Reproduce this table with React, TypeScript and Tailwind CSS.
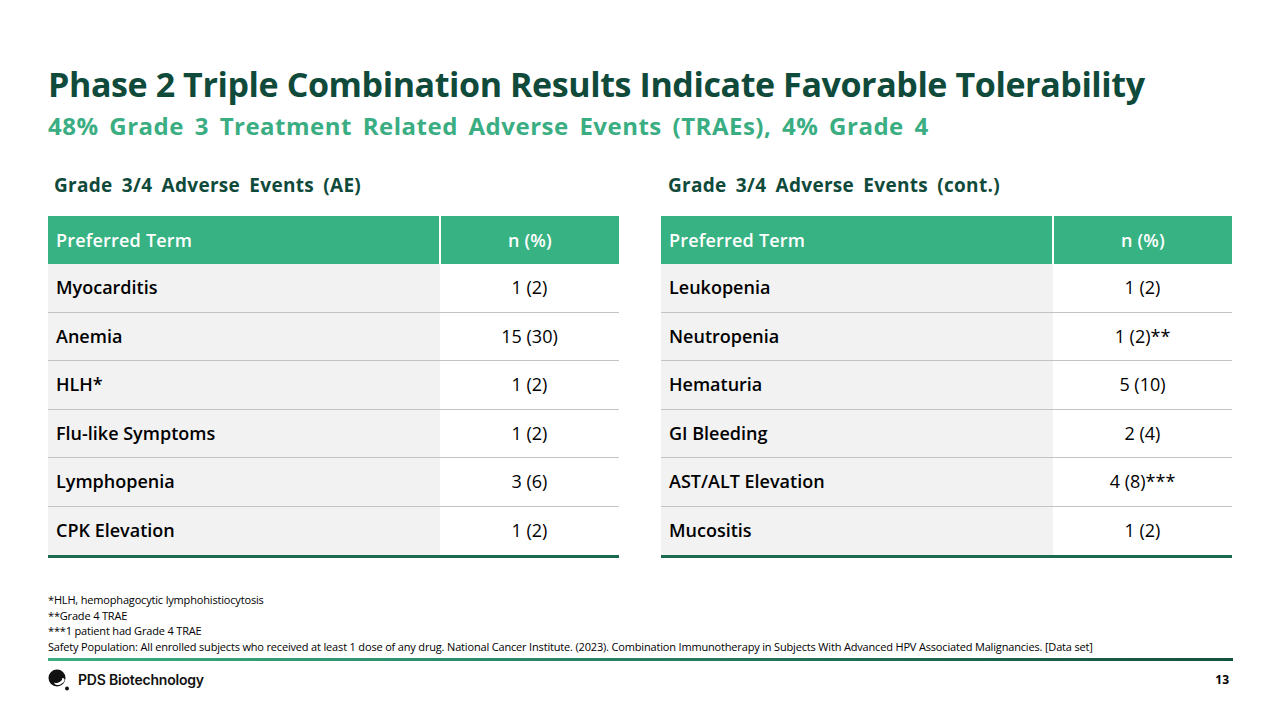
import React from "react";

const left = [
  ["Myocarditis", "1 (2)"],
  ["Anemia", "15 (30)"],
  ["HLH*", "1 (2)"],
  ["Flu-like Symptoms", "1 (2)"],
  ["Lymphopenia", "3 (6)"],
  ["CPK Elevation", "1 (2)"],
];
const right = [
  ["Leukopenia", "1 (2)"],
  ["Neutropenia", "1 (2)**"],
  ["Hematuria", "5 (10)"],
  ["GI Bleeding", "2 (4)"],
  ["AST/ALT Elevation", "4 (8)***"],
  ["Mucositis", "1 (2)"],
];

function Table({ title, rows, titleIndent }: { title: string; rows: string[][]; titleIndent: string }) {
  return (
    <div className="flex flex-col w-[571px]">
      <div
        className={`h-[36px] flex items-center text-[19px] font-bold text-[#0f4a3a] tracking-[0.3px] ${titleIndent}`}
        style={{ wordSpacing: "4px" }}
      >
        {title}
      </div>
      <div className="h-[13px]" />
      <div className="flex h-[48px] bg-[#37b282] text-white text-[18px] font-semibold tracking-[0.2px]">
        <div className="w-[391px] flex items-center pl-[8px]">Preferred Term</div>
        <div className="w-[2px] bg-white" />
        <div className="flex-1 flex items-center justify-center">n (%)</div>
      </div>
      {rows.map(([a, b], i) => (
        <div
          key={a}
          className={`flex h-[48.5px] text-[18px] text-black ${i < rows.length - 1 ? "border-b border-[#c4c4c4]" : ""}`}
        >
          <div className="w-[392px] bg-[#f2f2f2] flex items-center pl-[8px] font-semibold">{a}</div>
          <div className="flex-1 flex items-center justify-center">{b}</div>
        </div>
      ))}
      <div className="h-[3px] bg-[#1d6a53]" />
    </div>
  );
}

export default function App() {
  return (
    <div
      className="w-[1280px] h-[720px] bg-white relative overflow-hidden flex flex-col"
      style={{ fontFamily: '"Open Sans", "Noto Sans", sans-serif' }}
    >
      <div className="pl-[48px] pt-[61px]">
        <div className="text-[34px] leading-[46px] font-bold text-[#0f4a3a] tracking-[-0.4px]">
          Phase 2 Triple Combination Results Indicate Favorable Tolerability
        </div>
        <div
          className="mt-[4px] text-[24px] leading-[30px] font-bold text-[#3aae82] tracking-[0.5px]"
          style={{ wordSpacing: "4px" }}
        >
          48% Grade 3 Treatment Related Adverse Events (TRAEs), 4% Grade 4
        </div>
      </div>
      <div className="flex pl-[48px] gap-[42px] mt-[26px]">
        <Table title="Grade 3/4 Adverse Events (AE)" rows={left} titleIndent="pl-[6px]" />
        <Table title="Grade 3/4 Adverse Events (cont.)" rows={right} titleIndent="pl-[7px]" />
      </div>
      <div className="pl-[48px] mt-[34px] text-[11px] leading-[15.7px] text-black tracking-[-0.17px]">
        <div>*HLH, hemophagocytic lymphohistiocytosis</div>
        <div>**Grade 4 TRAE</div>
        <div>***1 patient had Grade 4 TRAE</div>
        <div>
          Safety Population: All enrolled subjects who received at least 1 dose of any drug. National Cancer Institute. (2023). Combination Immunotherapy in Subjects With Advanced HPV Associated Malignancies. [Data set]
        </div>
      </div>
      <div className="ml-[48px] w-[1185px] h-[3px] mt-[3px] bg-gradient-to-r from-[#3aae82] to-[#15513f]" />
      <div className="flex items-center justify-between pl-[48px] pr-[51px] mt-[8px] h-[22px]">
        <div className="flex items-center gap-[8px]">
          <svg width="22" height="22" viewBox="0 0 22 22" className="shrink-0">
            <circle cx="9" cy="9" r="8.5" fill="#111" />
            <ellipse cx="11.5" cy="12.5" rx="5.5" ry="3" transform="rotate(-25 11.5 12.5)" fill="#fff" />
            <ellipse cx="10" cy="11.2" rx="4.5" ry="2.2" transform="rotate(-25 10 11.2)" fill="#111" />
            <circle cx="19" cy="19.5" r="2" fill="#111" />
          </svg>
          <span className="text-[14px] font-semibold text-[#111] tracking-[-0.2px]" style={{ fontFamily: '"Inter", "Lato", sans-serif' }}>
            PDS Biotechnology
          </span>
        </div>
        <div className="text-[12px] font-bold text-black">13</div>
      </div>
    </div>
  );
}
